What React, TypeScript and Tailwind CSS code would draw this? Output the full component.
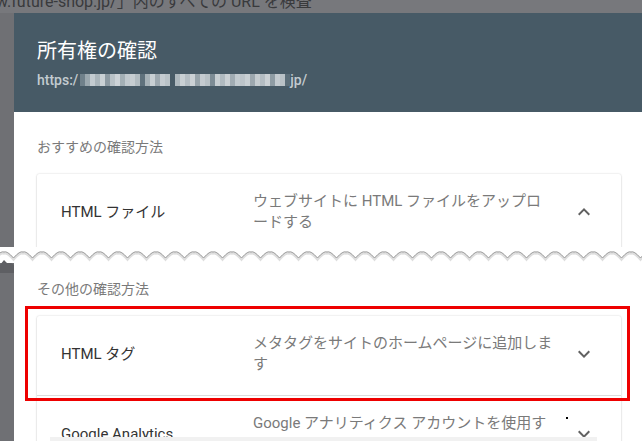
import React from "react";

const mosaic: string[] = [
  "bg-[#6f808a]", "bg-[#9aa7ae]", "bg-[#c3cbd0]", "bg-[#aab5bb]", "bg-[#c9d0d4]", "bg-[#8d9aa2]", "bg-[#b9c2c7]", "bg-[#cdd3d7]",
  "bg-[#a3afb5]", "bg-[#c0c8cd]", "bg-[#c6cdd1]", "bg-[#b2bcc1]", "bg-[#5f717c]", "bg-[#a6b1b7]", "bg-[#c8cfd3]", "bg-[#9ea9b0]",
  "bg-[#c5ccd1]", "bg-[#bac3c8]", "bg-[#475a66]", "bg-[#aeb8be]", "bg-[#c9d0d4]", "bg-[#b5bec4]", "bg-[#cbd1d5]", "bg-[#98a4ab]",
  "bg-[#c4cbd0]", "bg-[#b8c1c6]", "bg-[#7d8c95]", "bg-[#c7ced2]", "bg-[#b0bac0]", "bg-[#cad0d4]", "bg-[#a1acb3]", "bg-[#c2cacf]",
  "bg-[#bcc4c9]", "bg-[#c8cfd3]", "bg-[#9da8af]", "bg-[#c5ccd0]", "bg-[#b4bdc3]", "bg-[#cbd1d5]", "bg-[#8f9ca4]", "bg-[#c3cacf]",
  "bg-[#b9c1c6]", "bg-[#5c6e79]",
];

function ChevronUp() {
  return (
    <svg width="24" height="24" viewBox="0 0 24 24" className="fill-[#616161]">
      <path d="M12 8l-6 6 1.41 1.41L12 10.83l4.59 4.58L18 14z" />
    </svg>
  );
}

function ChevronDown() {
  return (
    <svg width="24" height="24" viewBox="0 0 24 24" className="fill-[#616161]">
      <path d="M16.59 8.59L12 13.17 7.41 8.59 6 10l6 6 6-6z" />
    </svg>
  );
}

function Row({ title, lines, up }: { title: string; lines: string[]; up?: boolean }) {
  return (
    <div className="flex items-center pl-[24px] pr-[25px] pt-[17px] pb-[20px]">
      <div className="w-[192px] shrink-0 text-[15px] leading-[21px] text-[#333333]">{title}</div>
      <div className="flex-1 text-[15px] leading-[21px] text-[#7a7a7a]">
        {lines.map((l, i) => (
          <div key={i} className="whitespace-nowrap">{l}</div>
        ))}
      </div>
      <div className="w-[24px] h-[24px] shrink-0">{up ? <ChevronUp /> : <ChevronDown />}</div>
    </div>
  );
}

function wave(offsetY: number) {
  // rounded bumps: peaks at top, troughs at bottom, period 19
  let d = "";
  const start = 4 - 19 * 2;
  for (let i = 0; i < 40; i++) {
    const px = start + i * 19; // peak x
    const tx = px + 9.5; // trough x
    const top = 5 + offsetY;
    const bot = 11 + offsetY;
    if (i === 0) d += `M${px - 9.5},${bot} `;
    d += `Q${px - 3},${top - 1.5} ${px},${top} Q${px + 3},${top - 1.5} ${tx},${bot} `;
  }
  return d;
}

export default function App() {
  return (
    <div className="relative w-[642px] h-[441px] overflow-hidden bg-[#6f7074] font-[Roboto,'Noto_Sans_CJK_JP',sans-serif]">
      <div className="h-[13px] overflow-hidden bg-[#77787c]">
        <div className="-mt-[8px] -ml-[4px] whitespace-nowrap text-[16px] leading-[20px] text-[#393a3c]">
          w.future-shop.jp/」内のすべての URL を検査
        </div>
      </div>
      <div className="flex">
        <div className="w-[14px] shrink-0 h-[428px] bg-[#6f7074]" />
        <div className="flex-1 h-[428px] bg-white">
          <div className="h-[99px] bg-[#475a66] pl-[23px] pt-[24px]">
            <div className="text-[20px] leading-[28px] text-white">所有権の確認</div>
            <div className="mt-[5px] flex items-center h-[20px] text-[14px] font-medium text-[#c3cbd0]">
              <span>https:/</span>
              <div className="flex h-[12px] ml-[2px]">
                {mosaic.map((c, i) => (
                  <div key={i} className={`w-[5px] h-[12px] ${c}`} />
                ))}
              </div>
              <span>jp/</span>
            </div>
          </div>
          <div className="pl-[23px] pr-[21px]">
            <div className="pt-[25px] text-[14px] leading-[20px] text-[#7a7a7a]">おすすめの確認方法</div>
            <div className="mt-[17px] h-[76px] overflow-hidden rounded-t-[2px] bg-white shadow-[0_0_2px_rgba(0,0,0,0.18),0_1px_2px_rgba(0,0,0,0.12)]">
              <Row title="HTML ファイル" lines={["ウェブサイトに HTML ファイルをアップロ", "ードする"]} up />
            </div>
            <div className="mt-[29px] text-[14px] leading-[20px] text-[#7a7a7a]">その他の確認方法</div>
            <div className="mt-[17px] rounded-[2px] bg-white shadow-[0_0_2px_rgba(0,0,0,0.18),0_1px_2px_rgba(0,0,0,0.12)]">
              <Row title="HTML タグ" lines={["メタタグをサイトのホームページに追加しま", "す"]} />
              <div className="border-t border-[#dcdcdc]">
                <Row title="Google Analytics" lines={["Google アナリティクス アカウントを使用す", "る"]} />
              </div>
            </div>
          </div>
        </div>
      </div>

      {/* torn edge */}
      <svg className="absolute left-0 top-[247px]" width="642" height="16" viewBox="0 0 642 16">
        <rect x="0" y="0" width="642" height="16" fill="#ffffff" />
        <path d={wave(1.5)} fill="none" stroke="#dedede" strokeWidth="2.5" />
        <path d={wave(0)} fill="none" stroke="#9a9a9a" strokeWidth="1" />
      </svg>
      <svg className="absolute left-0 top-[259px]" width="14" height="14" viewBox="0 0 14 14">
        <polygon points="0,14 0,6 4,1 7,4 11,4 14,6 14,14" fill="#5e5f63" />
      </svg>

      {/* highlight box */}
      <div className="absolute left-[25px] top-[306px] w-[605px] h-[95px] border-[3px] border-[#ee0000]" />

      {/* stray dot */}
      <div className="absolute left-[566px] top-[417px] w-[2px] h-[2px] bg-black" />

      {/* bottom overlay bar */}
      <div className="absolute left-[50px] top-[437px] w-[547px] h-[4px] bg-[#f1f1f1]" />
    </div>
  );
}
